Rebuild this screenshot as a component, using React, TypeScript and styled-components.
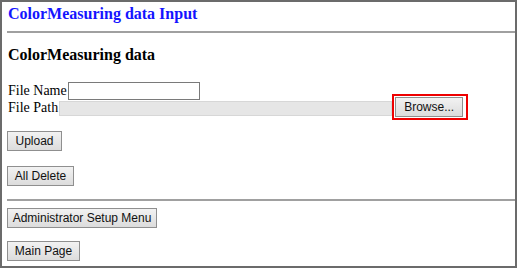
import styled, { createGlobalStyle } from "styled-components";

const GlobalStyle = createGlobalStyle`
  html, body {
    margin: 0;
    padding: 0;
    background: #ffffff;
  }
`;

const Frame = styled.div`
  box-sizing: border-box;
  width: 517px;
  height: 268px;
  border: 2px solid #6b6b6b;
  padding: 0 0 0 5px;
  font-family: "Liberation Serif", "Times New Roman", serif;
  font-size: 14px;
  color: #000;
  overflow: hidden;
`;

const PageTitle = styled.h1`
  margin: 0;
  padding: 3px 0 0 1px;
  height: 23px;
  font-size: 16px;
  font-weight: bold;
  color: #1414ff;
`;

const Rule = styled.hr<{ $top: number; $bottom: number }>`
  margin: ${(p) => p.$top}px 0 ${(p) => p.$bottom}px 0;
  border: 0;
  border-top: 2px solid #a0a0a0;
`;

const SectionTitle = styled.h2`
  margin: 0 0 0 1px;
  height: 36px;
  font-size: 16px;
  font-weight: bold;
`;

const FieldRow = styled.div`
  display: flex;
  align-items: center;
  padding-left: 1px;
  line-height: 16px;
`;

const NameInput = styled.input`
  box-sizing: border-box;
  width: 132px;
  height: 18px;
  margin-left: 1px;
  border: 1px solid #7a7a7a;
  padding: 0 2px;
`;

const PathBox = styled.div`
  display: flex;
  align-items: center;
  margin-left: 1px;
  flex: 0 0 auto;
`;

const PathField = styled.div`
  box-sizing: border-box;
  width: 333px;
  height: 15px;
  background: #e6e6e6;
  border: 1px solid #d7d7d7;
`;

const BrowseFrame = styled.div`
  box-sizing: border-box;
  border: 2px solid #ee0000;
  padding: 1px 3px 1px 1px;
  margin-top: -6px;
  margin-bottom: -4px;
`;

const Button = styled.button<{ $w: number }>`
  box-sizing: border-box;
  width: ${(p) => p.$w}px;
  height: 20px;
  padding: 0;
  background: linear-gradient(#f2f2f2, #dcdcdc);
  border: 1px solid #8f8f8f;
  border-radius: 0;
  font-family: "Liberation Sans", Arial, sans-serif;
  font-size: 12px;
  color: #111;
  display: block;
`;

const ButtonRow = styled.div<{ $gap: number }>`
  padding: ${(p) => p.$gap}px 0 0 0;
`;

export default function App() {
  return (
    <>
      <GlobalStyle />
      <Frame>
        <PageTitle>ColorMeasuring data Input</PageTitle>
        <Rule $top={3} $bottom={13} />
        <SectionTitle>ColorMeasuring data</SectionTitle>
        <FieldRow>
          File Name
          <NameInput type="text" />
        </FieldRow>
        <FieldRow>
          File Path
          <PathBox>
            <PathField />
            <BrowseFrame>
              <Button $w={68} type="button">Browse...</Button>
            </BrowseFrame>
          </PathBox>
        </FieldRow>
        <ButtonRow $gap={15}>
          <Button $w={55}>Upload</Button>
        </ButtonRow>
        <ButtonRow $gap={15}>
          <Button $w={67}>All Delete</Button>
        </ButtonRow>
        <Rule $top={13} $bottom={7} />
        <ButtonRow $gap={0}>
          <Button $w={150}>Administrator Setup Menu</Button>
        </ButtonRow>
        <ButtonRow $gap={13}>
          <Button $w={73}>Main Page</Button>
        </ButtonRow>
      </Frame>
    </>
  );
}
